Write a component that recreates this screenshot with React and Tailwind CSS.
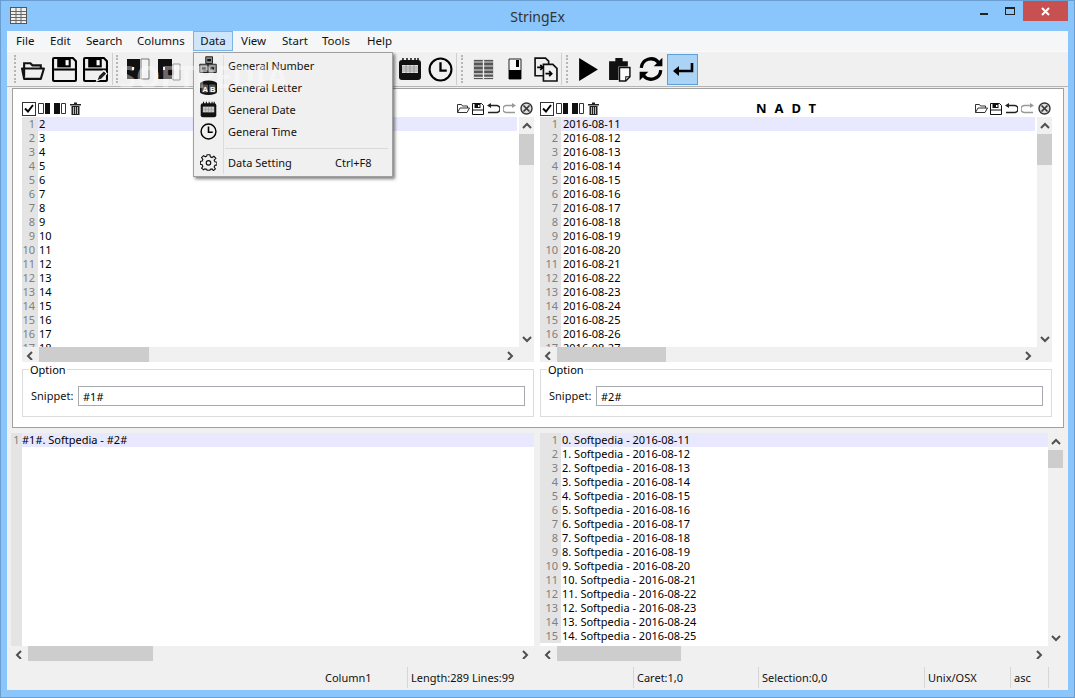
import React from "react";

const topLeft = Array.from({ length: 17 }, (_, i) => String(i + 2));
const topRight = Array.from({ length: 17 }, (_, i) => `2016-08-${11 + i}`);
const bottomRight = Array.from({ length: 15 }, (_, i) => `${i}. Softpedia - 2016-08-${11 + i}`);

const Svg = ({ s = 24, w, h, children }) => (
  <svg width={w || s} height={h || s} viewBox="0 0 24 24" className="shrink-0">
    {children}
  </svg>
);

// toolbar icons
const OpenIcon = ({ s = 25, c = "#111" }) => (
  <Svg s={s}>
    <path d="M3 19V6h6l2 2h8v3" fill="none" stroke={c} strokeWidth="2" />
    <path d="M1 11h21l-3 10H3z" fill="none" stroke={c} strokeWidth="2" strokeLinejoin="round" />
  </Svg>
);
const SaveIcon = ({ s = 25, pen }) => (
  <Svg s={s}>
    <path d="M2 1h18l3 3v18a1 1 0 0 1-1 1H2a1 1 0 0 1-1-1V2a1 1 0 0 1 1-1z" fill="none" stroke="#000" strokeWidth="2" />
    <path d="M5 1h13v9H5z" fill="#000" />
    <path d="M13 3h3v5h-3z" fill="#fff" />
    <path d="M2 11h20v2H2z" fill="#000" />
    {pen && <path d="M13 23l2-5 5-5 3 3-5 5z" fill="#222" stroke="#fff" strokeWidth="1" />}
  </Svg>
);
const ColsIcon = ({ s = 24, second }) => (
  <Svg s={s}>
    {second ? (
      <>
        <path d="M1 2h14v20H1z" fill="#111" />
        <path d="M6 10h2v3H6z" fill="#eee" />
        <path d="M16 7h7v16h-7z" fill="#f4f4f4" stroke="#999" />
      </>
    ) : (
      <>
        <path d="M1 2h13v20H1z" fill="#111" />
        <path d="M6 10h2v3H6z" fill="#eee" />
        <path d="M15 2h8v20h-8z" fill="#f4f4f4" stroke="#777" />
      </>
    )}
  </Svg>
);
const CalendarIcon = ({ s = 24 }) => (
  <Svg s={s}>
    <rect x="1" y="3" width="22" height="20" rx="3" fill="#111" />
    <path d="M5 1v4M9 1v4M13 1v4M17 1v4M20 1v4" stroke="#111" strokeWidth="1.5" />
    <rect x="4" y="8" width="16" height="8" fill="#ddd" />
    <path d="M4 10h16M4 12h16M4 14h16M8 8v8M12 8v8M16 8v8" stroke="#888" strokeWidth=".7" />
  </Svg>
);
const ClockIcon = ({ s = 25 }) => (
  <Svg s={s}>
    <circle cx="12" cy="12" r="10.5" fill="none" stroke="#000" strokeWidth="2" />
    <path d="M12 5v8h6" fill="none" stroke="#000" strokeWidth="2.2" />
  </Svg>
);
const TableIcon = () => (
  <Svg s={21}>
    <rect x="1" y="1" width="22" height="22" fill="#555" />
    <path d="M1 3.500h22M1 8h22M1 12.500h22M1 17h22M1 21h22" stroke="#ddd" strokeWidth="1.2" />
    <path d="M12 1v22" stroke="#eee" strokeWidth="1.5" />
  </Svg>
);
const HalfIcon = () => (
  <Svg s={24}>
    <path d="M6 2h12v20H6z" fill="#f8f8f8" stroke="#222" />
    <path d="M6 13h12v9H6z" fill="#000" />
    <path d="M13 3h3v7h-3z" fill="#000" />
  </Svg>
);
const CopyIcon = () => (
  <Svg s={25}>
    <path d="M2 1h10l3 3v14H2z" fill="#f0f0f0" stroke="#111" strokeWidth="1.6" />
    <path d="M10 7h9l4 4v12H10z" fill="#f0f0f0" stroke="#111" strokeWidth="1.6" />
    <path d="M4 10h5M7 7.500l2.500 2.500L7 12.500M12 16h6M15.500 13.500l2.500 2.500-2.500 2.500" fill="none" stroke="#000" strokeWidth="1.6" />
  </Svg>
);
const PlayIcon = () => (
  <Svg s={25}>
    <path d="M3 1l18 11L3 23z" fill="#000" />
  </Svg>
);
const PasteIcon = () => (
  <Svg s={25}>
    <path d="M2 4h6V1h7v3h5v5H11v13H2z" fill="#111" />
    <path d="M12 10h10v9l-4 4h-6z" fill="#fafafa" stroke="#111" strokeWidth="1.4" />
    <path d="M18 23v-4h4" fill="none" stroke="#111" />
  </Svg>
);
const RefreshIcon = () => (
  <Svg s={26}>
    <path d="M3 11a9 9 0 0 1 16-5" fill="none" stroke="#000" strokeWidth="3" />
    <path d="M22.500 1.500v8h-8z" fill="#000" />
    <path d="M21 13a9 9 0 0 1-16 5" fill="none" stroke="#000" strokeWidth="3" />
    <path d="M1.500 22.500v-8h8z" fill="#000" />
  </Svg>
);
const ReturnIcon = () => (
  <Svg s={24}>
    <path d="M21 6v8H5" fill="none" stroke="#000" strokeWidth="2.600" />
    <path d="M8 9l-6 5 6 5z" fill="#000" />
  </Svg>
);

// menu only
const BlocksIcon = () => (
  <Svg s={18}>
    <path d="M9 1h9v9H9z" fill="#8a8a8a" stroke="#222" strokeWidth="1.300" />
    <path d="M1 11h11v11H1zM12 11h11v11H12z" fill="#9a9a9a" stroke="#222" strokeWidth="1.300" />
    <path d="M11 5.500h5M4 16.500h5M15 16.500h5" stroke="#111" strokeWidth="3" />
  </Svg>
);
const LetterIcon = () => (
  <svg width="17" height="15" viewBox="0 0 17 15" className="shrink-0">
    <ellipse cx="8.500" cy="3.500" rx="8.500" ry="3" fill="#111" />
    <rect x="0" y="3" width="17" height="9" fill="#111" />
    <ellipse cx="8.500" cy="12" rx="8.500" ry="3" fill="#111" />
    <rect x="1.500" y="4.500" width="6.500" height="8" rx="1" fill="#555" />
    <rect x="9" y="4.500" width="6.500" height="8" rx="1" fill="#555" />
    <text x="2.500" y="11.500" fontSize="7.500" fontWeight="bold" fill="#fff" fontFamily="Liberation Sans, sans-serif">A</text>
    <text x="10" y="11.500" fontSize="7.500" fontWeight="bold" fill="#fff" fontFamily="Liberation Sans, sans-serif">B</text>
  </svg>
);
const GearIcon = () => (
  <Svg s={17}>
    <path
      d="M10 1h4l.6 3 2.400 1 2.600-1.700 2.800 2.800L20 8.600l1 2.400 3 .6v3.800l-3 .6-1 2.400 1.700 2.600-2.800 2.400L17 21l-2.400.5-.6 1.500h-4l-.6-1.500L7 21l-2 1.300-2.700-2.400L4 17.400 3 15l-2.500-.6v-3.800L3 10l1-2.400-1.700-2.500L5 2.300 7.400 4l2-1z"
      fill="none"
      stroke="#111"
      strokeWidth="1.600"
    />
    <circle cx="12" cy="12.500" r="3.200" fill="none" stroke="#111" strokeWidth="1.600" />
  </Svg>
);

// small pane header icons
const ColLeft = () => (
  <svg width="12" height="11" viewBox="0 0 12 11" className="shrink-0">
    <path d="M.5.500h5v10h-5z" fill="#fff" stroke="#333" />
    <path d="M7 0h5v11H7z" fill="#111" />
  </svg>
);
const ColRight = () => (
  <svg width="12" height="11" viewBox="0 0 12 11" className="shrink-0">
    <path d="M0 0h6v11H0z" fill="#111" />
    <path d="M7.500.500h4v10h-4z" fill="#fff" stroke="#333" />
  </svg>
);
const TrashIcon = () => (
  <svg width="11" height="13" viewBox="0 0 11 13" className="shrink-0">
    <path d="M0 2h11v1.500H0zM4 .5h3V2H4z" fill="#222" />
    <path d="M1.500 4h8v9h-8z" fill="#222" />
    <path d="M3.500 5v7M5.500 5v7M7.500 5v7" stroke="#bbb" />
  </svg>
);
const SmallFolder = () => (
  <svg width="13" height="11" viewBox="0 0 13 11" className="shrink-0">
    <path d="M.5 9.500v-8h4l1 1.500h5v2M.5 9.500l2.500-4.500h9.500L10 9.500z" fill="none" stroke="#333" />
  </svg>
);
const SmallSave = () => (
  <svg width="12" height="12" viewBox="0 0 12 12" className="shrink-0">
    <path d="M.5.500h9l2 2v9H.500z" fill="none" stroke="#111" />
    <path d="M2.500 1h6v4h-6zM1 6.500h10v1H1z" fill="#111" />
    <path d="M6 2h1.500v2H6z" fill="#fff" />
  </svg>
);
const Undo = ({ c = "#222" }) => (
  <svg width="13" height="11" viewBox="0 0 13 11" className="shrink-0">
    <path d="M3 2.500h6.500a3.500 3.500 0 0 1 0 7H1" fill="none" stroke={c} strokeWidth="1.500" />
    <path d="M4 0L0 2.500 4 5z" fill={c} />
  </svg>
);
const Redo = () => (
  <svg width="13" height="11" viewBox="0 0 13 11" className="shrink-0">
    <path d="M10 2.500H3.500a3.500 3.500 0 0 0 0 7H12" fill="none" stroke="#999" strokeWidth="1.500" />
    <path d="M9 0l4 2.500L9 5z" fill="#999" />
  </svg>
);
const CloseCircle = () => (
  <svg width="13" height="13" viewBox="0 0 13 13" className="shrink-0">
    <circle cx="6.500" cy="6.500" r="5.500" fill="#ddd" stroke="#333" strokeWidth="1.400" />
    <path d="M3.500 3.500l6 6M9.500 3.500l-6 6" stroke="#333" strokeWidth="1.600" />
  </svg>
);

const Chevron = ({ dir }) => {
  const paths = {
    up: "M1 6l4-4 4 4",
    down: "M1 2l4 4 4-4",
    left: "M6 1L2 5l4 4",
    right: "M2 1l4 4-4 4",
  };
  return (
    <svg width="10" height="10" viewBox="0 0 10 8" className="shrink-0">
      <path d={paths[dir]} fill="none" stroke="#505050" strokeWidth="2" />
    </svg>
  );
};

const ToolBtn = ({ children, active }) => (
  <div
    className={
      active
        ? "w-[31px] h-[31px] ml-px flex items-center justify-center bg-[#aad3f5] border border-[#5b9fdb]"
        : "w-[31px] h-[31px] flex items-center justify-center"
    }
  >
    {children}
  </div>
);

const Grip = () => (
  <div className="w-[3px] h-[28px] mx-[1px] border-l-2 border-dotted border-[#b5b5b5]" />
);
const ToolSep = () => <div className="w-px h-[32px] bg-[#cfcfcf]" />;

function Editor({ lines, gutter, height }) {
  return (
    <div className="flex-1 min-w-0 overflow-hidden bg-white" style={{ height }}>
      {lines.map((line, i) => (
        <div key={i} className="flex h-[14px] leading-[14px]">
          <div
            className="shrink-0 bg-[#e4e4e4] text-right text-[#808080]"
            style={{ width: gutter.w, paddingRight: gutter.pr }}
          >
            {i + 1}
          </div>
          <div
            className={i === 0 ? "flex-1 bg-[#e8e8ff] text-black" : "flex-1 text-black"}
            style={{ paddingLeft: gutter.pl }}
          >
            {line}
          </div>
        </div>
      ))}
    </div>
  );
}

function VScroll({ thumb }) {
  return (
    <div className="w-[15px] shrink-0 bg-[#f0f0f0] flex flex-col">
      <div className="h-[17px] flex items-center justify-center">
        <Chevron dir="up" />
      </div>
      <div className="flex-1">
        <div className="bg-[#cdcdcd]" style={{ height: thumb }} />
      </div>
      <div className="h-[17px] flex items-center justify-center">
        <Chevron dir="down" />
      </div>
    </div>
  );
}

// horizontal scrollbar, corner is the blank square under a vertical bar
function HScroll({ thumb, corner }) {
  return (
    <div className="h-[15px] bg-[#f0f0f0] flex">
      <div className="w-[17px] shrink-0 flex items-center justify-center">
        <Chevron dir="left" />
      </div>
      <div className="flex-1">
        <div className="h-[15px] bg-[#cdcdcd]" style={{ width: thumb }} />
      </div>
      <div className="w-[17px] shrink-0 flex items-center justify-center">
        <Chevron dir="right" />
      </div>
      {corner && <div className="w-[15px] shrink-0" />}
    </div>
  );
}

function Pane({ lines, gutter, thumb, title, snippet }) {
  return (
    <div className="w-[512px] shrink-0">
      <div className="h-[17px] flex items-center justify-between">
        <div className="flex items-center">
          <div className="w-[14px] h-[14px] border border-[#333] bg-white flex items-center justify-center">
            <svg width="10" height="9" viewBox="0 0 10 9">
              <path d="M1 4.500l3 3 5-6.500" fill="none" stroke="#000" strokeWidth="2" />
            </svg>
          </div>
          <div className="flex items-center gap-[4px] ml-[2px]">
            <ColLeft />
            <ColRight />
            <TrashIcon />
          </div>
        </div>
        {title && <div className="pl-[6px] font-bold text-[13px] tracking-[8px] text-black">{title}</div>}
        <div className="flex items-center pr-[1px]">
          <SmallFolder />
          <div className="ml-[2px]"><SmallSave /></div>
          <div className="ml-[3px]"><Undo /></div>
          <div className="ml-[3px]"><Redo /></div>
          <div className="ml-[4px]"><CloseCircle /></div>
        </div>
      </div>
      <div className="flex h-[230px] gap-[2px]">
        <Editor lines={lines} gutter={gutter} height={230} />
        <VScroll thumb={31} />
      </div>
      <HScroll thumb={thumb} corner />
      <fieldset className="mt-px h-[54px] border border-[#dcdcdc] px-[8px]">
        <legend className="-ml-[2px] px-[1px] leading-[13px]">Option</legend>
        <div className="flex items-center mt-[10px]">
          <span className="w-[47px] shrink-0 text-[#111]">Snippet:</span>
          <input
            readOnly
            value={snippet}
            className="flex-1 min-w-0 h-[20px] border border-[#a9a9b0] bg-white px-[4px] outline-none text-black"
          />
        </div>
      </fieldset>
    </div>
  );
}

const menuItems = [
  { label: "General Number", icon: <BlocksIcon /> },
  { label: "General Letter", icon: <LetterIcon /> },
  { label: "General Date", icon: <CalendarIcon s={17} /> },
  { label: "General Time", icon: <ClockIcon s={17} /> },
];

const StatusCell = ({ w, children }) => (
  <div
    className="h-[21px] shrink-0 border-l border-[#d6d6d6] pl-[3px] pt-px flex items-center text-[#111]"
    style={{ width: w }}
  >
    {children}
  </div>
);

export default function App() {
  return (
    <div className="relative w-[1075px] h-[698px] overflow-hidden bg-[#8ac5fb] border border-[#6a9dd0] flex flex-col font-['Noto_Sans',sans-serif] text-[11px] select-none">
      {/* title bar */}
      <div className="h-[30px] shrink-0 relative flex items-center justify-center text-[14px] text-[#333]">
        <div className="absolute left-[9px] top-[6px]">
          <svg width="17" height="17" viewBox="0 0 17 17">
            <rect x=".5" y=".5" width="16" height="16" fill="#eee" stroke="#555" />
            <path d="M1 4.500h15M1 7.500h15M1 10.500h15M1 13.500h15M6 1v15M11 1v15" stroke="#666" />
          </svg>
        </div>
        <span className="mt-[1px]">StringEx</span>
        <div className="absolute right-[6px] top-0 flex items-start">
          <div className="w-[26px] h-[20px] flex items-center justify-center">
            <div className="w-[8px] h-[2px] mt-[6px] bg-[#222]" />
          </div>
          <div className="w-[26px] h-[20px] flex items-center justify-center">
            <div className="w-[10px] h-[8px] border border-t-2 border-[#222]" />
          </div>
          <div className="w-[45px] h-[20px] bg-[#c75050] flex items-center justify-center">
            <svg width="9" height="9" viewBox="0 0 9 9">
              <path d="M1 1l7 7M8 1L1 8" stroke="#fff" strokeWidth="2" />
            </svg>
          </div>
        </div>
      </div>

      {/* client area */}
      <div className="ml-[6px] mr-[6px] h-[659px] shrink-0 bg-[#f0f0f0] flex flex-col">
        {/* menu bar */}
        <div className="h-[20px] shrink-0 bg-[#f5f6f7] flex items-center pl-[1px] text-[11.500px] text-[#111]">
          {[
            ["File", 34],
            ["Edit", 36],
            ["Search", 51],
            ["Columns", 63],
          ].map(([m, w]) => (
            <div key={m} className="pl-[8px]" style={{ width: w }}>
              {m}
            </div>
          ))}
          <div className="w-[40px] h-[20px] ml-[1px] flex items-center justify-center bg-[#cfe5fa] border border-[#7ab3e8]">
            Data
          </div>
          {[
            ["View", 41],
            ["Start", 40],
            ["Tools", 45],
            ["Help", 40],
          ].map(([m, w]) => (
            <div key={m} className="pl-[8px]" style={{ width: w }}>
              {m}
            </div>
          ))}
        </div>

        {/* toolbar */}
        <div className="h-[36px] shrink-0 border-t border-[#fbfbfb] border-b border-b-[#b4b4b4] flex items-center pl-[6px]">
          <Grip />
          <ToolBtn><OpenIcon /></ToolBtn>
          <ToolBtn><SaveIcon /></ToolBtn>
          <ToolBtn><SaveIcon pen /></ToolBtn>
          <div className="w-px" />
          <ToolSep />
          <div className="w-[2px]" />
          <Grip />
          <div className="w-[2px]" />
          <ToolBtn><ColsIcon /></ToolBtn>
          <ToolBtn><ColsIcon second /></ToolBtn>
          {/* the buttons here sit behind the open menu */}
          <div className="w-[210px]" />
          <ToolBtn><CalendarIcon /></ToolBtn>
          <ToolBtn><ClockIcon /></ToolBtn>
          <ToolSep />
          <div className="w-[3px]" />
          <Grip />
          <div className="w-[3px]" />
          <ToolBtn><TableIcon /></ToolBtn>
          <ToolBtn><HalfIcon /></ToolBtn>
          <ToolBtn><CopyIcon /></ToolBtn>
          <ToolSep />
          <div className="w-[3px]" />
          <Grip />
          <div className="w-[3px]" />
          <ToolBtn><PlayIcon /></ToolBtn>
          <ToolBtn><PasteIcon /></ToolBtn>
          <ToolBtn><RefreshIcon /></ToolBtn>
          <ToolBtn active><ReturnIcon /></ToolBtn>
        </div>

        {/* upper panel */}
        <div className="ml-[5px] mr-[4px] mt-px h-[340px] shrink-0 bg-white border border-[#a0a0a0] pl-[9px] pt-[11px] flex gap-[6px]">
          <Pane lines={topLeft} gutter={{ w: 16, pr: 3, pl: 1 }} thumb={110} snippet="#1#" />
          <Pane lines={topRight} gutter={{ w: 21, pr: 3, pl: 2 }} thumb={109} title="NADT" snippet="#2#" />
        </div>

        {/* lower editors */}
        <div className="ml-[4px] mr-[4px] mt-[5px] flex gap-[6px]">
          <div className="w-[523px] shrink-0">
            <div className="h-[213px] bg-white">
              <div className="flex h-[14px] leading-[14px]">
                <div className="w-[11px] bg-[#e4e4e4] text-center text-[#808080]">1</div>
                <div className="flex-1 bg-[#e8e8ff] text-black">#1#. Softpedia - #2#</div>
              </div>
              <div className="w-[11px] h-[199px] bg-[#e4e4e4]" />
            </div>
            <HScroll thumb={125} />
          </div>
          <div className="w-[523px] shrink-0">
            <div className="h-[213px] flex">
              <Editor lines={bottomRight} gutter={{ w: 21, pr: 3, pl: 1 }} height={213} />
              <VScroll thumb={18} />
            </div>
            <HScroll thumb={124} corner />
          </div>
        </div>

        {/* status bar */}
        <div className="mt-[6px] flex items-center">
          <div className="w-[400px] shrink-0 pl-[318px] pt-px text-[#111]">Column1</div>
          <StatusCell w={226}>Length:289 Lines:99</StatusCell>
          <StatusCell w={125}>Caret:1,0</StatusCell>
          <StatusCell w={166}>Selection:0,0</StatusCell>
          <StatusCell w={86}>Unix/OSX</StatusCell>
          <StatusCell w={38}>asc</StatusCell>
          <StatusCell w={13}>{""}</StatusCell>
        </div>
      </div>

      {/* open Data menu */}
      <div className="absolute left-[192px] top-[51px] w-[200px] h-[125px] bg-[#f0f0f0] border border-[#a0a0a0] shadow-[2px_2px_3px_rgba(0,0,0,0.5)] pt-[2px] px-px text-[11px] text-[#111]">
        <div className="absolute left-[29px] top-[2px] bottom-[2px] w-px bg-[#dcdcdc]" />
        {menuItems.map((item) => (
          <div key={item.label} className="h-[22px] flex items-center">
            <div className="w-[26px] mb-[2px] flex justify-center">{item.icon}</div>
            <div className="pl-[7px]">{item.label}</div>
          </div>
        ))}
        <div className="h-[6px] ml-[30px] mr-[3px] border-b border-[#d9d9d9]" />
        <div className="h-[22px] mt-[3px] flex items-center">
          <div className="w-[26px] mb-[2px] flex justify-center">
            <GearIcon />
          </div>
          <div className="pl-[7px] w-[114px]">Data Setting</div>
          <div>Ctrl+F8</div>
        </div>
      </div>

      {/* Softpedia watermark */}
      <div className="absolute left-[118px] top-[52px] text-[31px] font-bold text-white/40 pointer-events-none">
        SOFTPEDIA
      </div>
    </div>
  );
}
